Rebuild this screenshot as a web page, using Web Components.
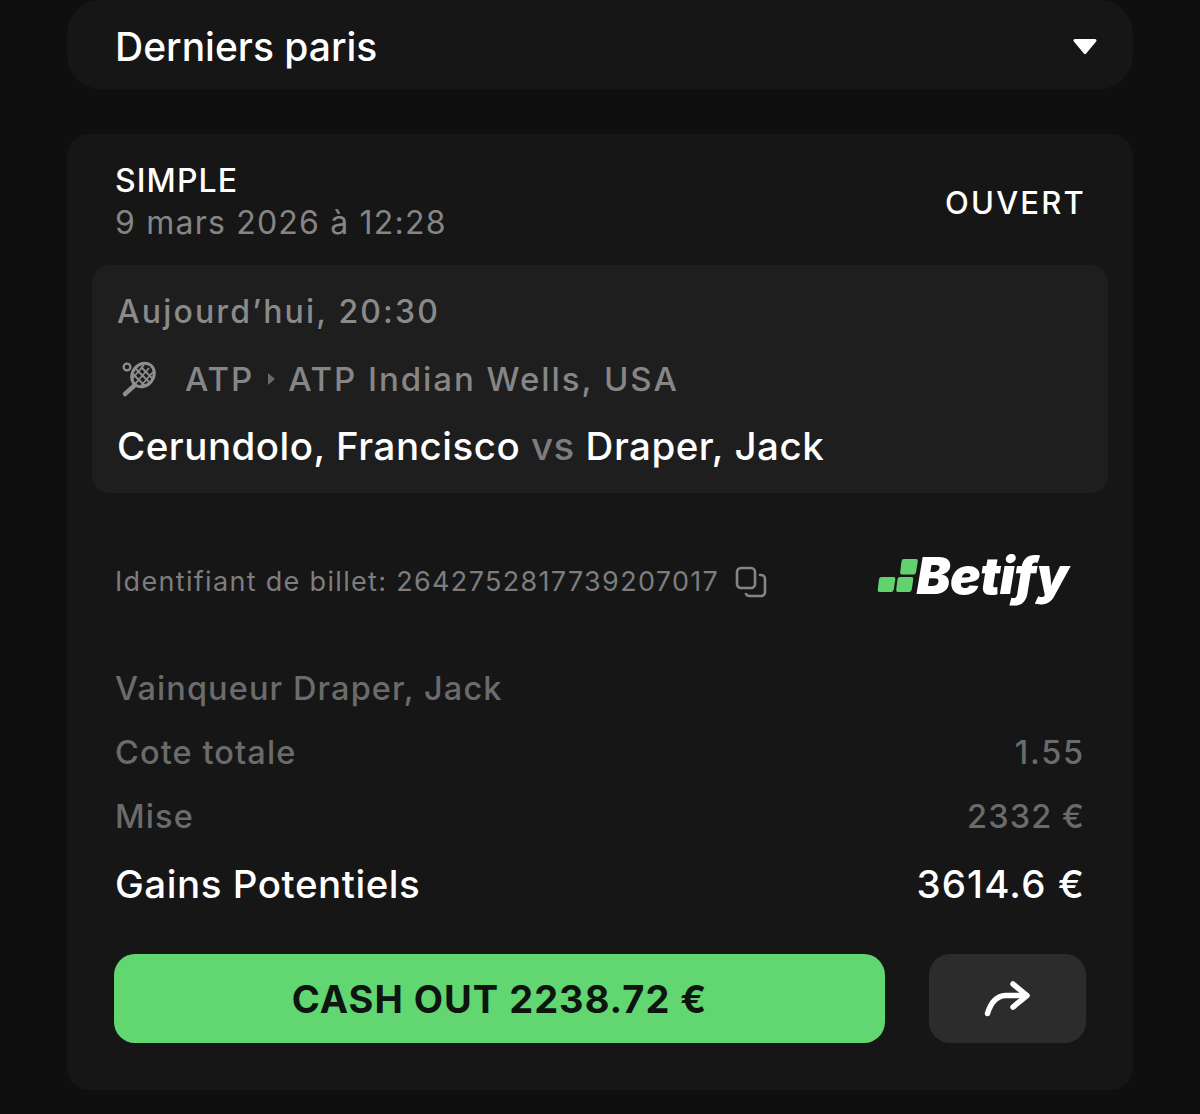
<!DOCTYPE html>
<html lang="fr">
<head>
<meta charset="utf-8">
<style>
    html, body { margin: 0; background: #0f0f10; }
    body { font-family: Inter, "Liberation Sans", sans-serif; height: 1114px; overflow: hidden; }
    .page { display: flex; flex-direction: column; gap: 45px; padding: 0 67px; }
</style>
</head>
<body>
<div class="page">
    <bet-header>Derniers paris</bet-header>
    <bet-card>
        <event-panel></event-panel>
        <ticket-row></ticket-row>
        <bet-lines></bet-lines>
        <bet-actions></bet-actions>
    </bet-card>
</div>
<script>
class BetHeader extends HTMLElement {
    constructor() {
        super();
        this.attachShadow({ mode: 'open' }).innerHTML = `
            <style>
                :host {
                    display: flex;
                    align-items: center;
                    justify-content: space-between;
                    height: 89px;
                    padding: 3px 35px 0 48px;
                    box-sizing: border-box;
                    background: #161617;
                    border-radius: 34px;
                    color: #fff;
                    font-size: 39px;
                    font-weight: 500;
                }
                svg { display: block; margin-top: 1px; }
            </style>
            <slot></slot>
            <svg width="26" height="17" viewBox="0 0 26 17">
                <path d="M3 2.500h20l-10 12z" fill="#fff" stroke="#fff" stroke-width="3" stroke-linejoin="round"/>
            </svg>
        `;
    }
}

class BetCard extends HTMLElement {
    constructor() {
        super();
        this.attachShadow({ mode: 'open' }).innerHTML = `
            <style>
                :host {
                    display: block;
                    height: 956px;
                    box-sizing: border-box;
                    background: #161617;
                    border-radius: 22px;
                    padding: 28px 25px 0;
                }
                .top {
                    display: flex;
                    justify-content: space-between;
                    align-items: flex-start;
                    padding: 0 23px;
                    height: 103px;
                    box-sizing: border-box;
                }
                .kind { color: #fff; font-size: 32px; font-weight: 500; line-height: 38px; letter-spacing: 1.1px; }
                .date { color: #858585; font-size: 32px; font-weight: 400; line-height: 44px; letter-spacing: 1.2px; margin-top: 1px; }
                .state { color: #fff; font-size: 31px; font-weight: 500; letter-spacing: 2.2px; margin-top: 22px; line-height: 38px; margin-right: -1px; }
            </style>
            <div class="top">
                <div>
                    <div class="kind">SIMPLE</div>
                    <div class="date">9 mars 2026 à 12:28</div>
                </div>
                <div class="state">OUVERT</div>
            </div>
            <slot></slot>
        `;
    }
}

class EventPanel extends HTMLElement {
    constructor() {
        super();
        this.attachShadow({ mode: 'open' }).innerHTML = `
            <style>
                :host {
                    display: block;
                    height: 228px;
                    box-sizing: border-box;
                    background: #1e1e1f;
                    border-radius: 18px;
                    padding: 25px 25px 0;
                }
                .when { color: #8a8a8a; font-size: 32px; font-weight: 500; line-height: 44px; letter-spacing: 2.15px; }
                .league {
                    display: flex;
                    align-items: center;
                    margin-top: 23px;
                    color: #868686;
                    font-size: 33px;
                    font-weight: 500;
                    line-height: 44px;
                    letter-spacing: 1.95px;
                }
                .league svg.racket { margin: 0 28px 0 1px; }
                .league svg.sep { margin: 0 12px 0 13px; }
                .match {
                    margin-top: 22px;
                    color: #fff;
                    font-size: 38.5px;
                    font-weight: 500;
                    line-height: 46px;
                    letter-spacing: .5px;
                }
                .vs { color: #7d7d7d; }
            </style>
            <div class="when">Aujourd’hui, 20:30</div>
            <div class="league">
                <svg class="racket" width="39" height="38" viewBox="0 0 39 38" fill="none" stroke="#8f8f8f">
                    <circle cx="9" cy="7" r="3.400" stroke-width="2.200"/>
                    <ellipse cx="25" cy="15" rx="10.500" ry="12.500" transform="rotate(38 25 15)" stroke-width="3"/>
                    <path d="M18 9l14 14M23 7l12 12M15 14l12 12M31 8L17 24M35 12L22 27M26 5L14 19" stroke-width="1.800"/>
                    <path d="M17 25L7 34" stroke-width="4.500" stroke-linecap="round"/>
                </svg>
                <span>ATP</span>
                <svg class="sep" width="9" height="14" viewBox="0 0 9 14"><path d="M1 1l7 6-7 6z" fill="#6a6a6a"/></svg>
                <span>ATP Indian Wells, USA</span>
            </div>
            <div class="match">Cerundolo, Francisco <span class="vs">vs</span> Draper, Jack</div>
        `;
    }
}

class TicketRow extends HTMLElement {
    constructor() {
        super();
        this.attachShadow({ mode: 'open' }).innerHTML = `
            <style>
                :host {
                    display: flex;
                    align-items: center;
                    height: 164px;
                    padding: 12px 40px 0 23px;
                    box-sizing: border-box;
                    color: #7d7d7d;
                    font-size: 27px;
                    letter-spacing: 1.32px;
                }
                .copy { margin-left: 16px; margin-top: 1px; }
                .logo { margin-left: auto; display: flex; align-items: center; padding-bottom: 11px; }
                .mark { display: block; margin-right: -3px; }
                .name {
                    color: #fff;
                    font-size: 51px;
                    font-weight: 900;
                    font-style: italic;
                    letter-spacing: -.6px;
                    line-height: 60px;
                }
            </style>
            <span>Identifiant de billet: 2642752817739207017</span>
            <svg class="copy" width="32" height="32" viewBox="0 0 32 32" fill="none" stroke="#858585" stroke-width="2.600" stroke-linecap="round">
                <rect x="2" y="2" width="18" height="20" rx="4"/>
                <path d="M25 9h1a4 4 0 0 1 4 4v13a4 4 0 0 1-4 4H14a4 4 0 0 1-3-2"/>
            </svg>
            <div class="logo">
                <svg class="mark" width="42" height="36" viewBox="0 0 42 36" fill="#62d26f">
                    <path d="M4.500 19h12q2.200 0 1.800 2.200l-1.600 10.600q-.4 2.200-2.600 2.200H2.500q-2.200 0-1.800-2.200l1.300-10.600q.3-2.200 2.500-2.200z"/>
                    <path d="M23 19h11.500q2.200 0 1.800 2.200l-1.600 10.600q-.4 2.200-2.600 2.200H21q-2.200 0-1.800-2.200l1.300-10.600q.3-2.200 2.500-2.200z"/>
                    <path d="M27 1h12q2.200 0 1.800 2.200l-1.800 11q-.4 2.200-2.600 2.200H25q-2.200 0-1.800-2.200l1.300-11q.3-2.200 2.500-2.200z"/>
                </svg>
                <span class="name">Betify</span>
            </div>
        `;
    }
}

class BetLines extends HTMLElement {
    constructor() {
        super();
        this.attachShadow({ mode: 'open' }).innerHTML = `
            <style>
                :host {
                    display: block;
                    padding: 0 23px;
                    color: #6b6b6b;
                    font-size: 32.5px;
                    font-weight: 500;
                    letter-spacing: 1.1px;
                }
                .line { display: flex; justify-content: space-between; height: 64px; line-height: 64px; }
                .line:first-child { color: #5a5a5a; }
                .odds { letter-spacing: 1.8px; }
                .total {
                    color: #fff;
                    font-size: 38.5px;
                    letter-spacing: .55px;
                    height: 72px;
                    line-height: 70px;
                }
                .total span + span { letter-spacing: 1.15px; }
            </style>
            <div class="line"><span>Vainqueur Draper, Jack</span></div>
            <div class="line"><span>Cote totale</span><span class="odds">1.55</span></div>
            <div class="line"><span>Mise</span><span>2332 €</span></div>
            <div class="line total"><span>Gains Potentiels</span><span>3614.6 €</span></div>
        `;
    }
}

class BetActions extends HTMLElement {
    constructor() {
        super();
        this.attachShadow({ mode: 'open' }).innerHTML = `
            <style>
                :host {
                    display: flex;
                    gap: 44px;
                    margin-top: 33px;
                    padding: 0 22px 0 22px;
                }
                .cash {
                    flex: 1;
                    height: 89px;
                    background: #62d671;
                    border-radius: 21px;
                    display: flex;
                    align-items: center;
                    justify-content: center;
                    color: #0e1410;
                    font-size: 38px;
                    font-weight: 700;
                    letter-spacing: 1px;
                }
                .share {
                    width: 157px;
                    height: 89px;
                    background: #2c2c2d;
                    border-radius: 21px;
                    display: flex;
                    align-items: center;
                    justify-content: center;
                }
            </style>
            <div class="cash">CASH OUT 2238.72 €</div>
            <div class="share">
                <svg width="48" height="36" viewBox="0 0 48 36" fill="none" stroke="#fff" stroke-width="5.500" stroke-linecap="round" stroke-linejoin="round">
                    <path d="M3.500 32.500c3-10 8-17.500 18-18h21"/>
                    <path d="M29 3l14 11.500L29 26"/>
                </svg>
            </div>
        `;
    }
}

customElements.define('bet-header', BetHeader);
customElements.define('bet-card', BetCard);
customElements.define('event-panel', EventPanel);
customElements.define('ticket-row', TicketRow);
customElements.define('bet-lines', BetLines);
customElements.define('bet-actions', BetActions);
</script>
</body>
</html>
